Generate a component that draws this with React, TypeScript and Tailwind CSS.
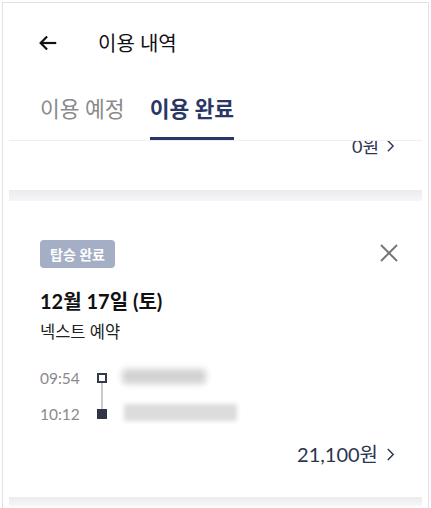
import React from "react";

const font = { fontFamily: "Lato, 'Noto Sans CJK KR', sans-serif" };

const Chevron = ({ className }: { className?: string }) => (
  <svg className={className} viewBox="0 0 10 16" fill="none" stroke="currentColor" strokeWidth="1.6">
    <polyline points="2,2 8,8 2,14" />
  </svg>
);

export default function App() {
  return (
    <div className="w-[431px] h-[508px] bg-white overflow-hidden pt-[2px] pl-[2px] pr-[2px]" style={font}>
      <div className="h-[520px] border-l border-t border-r border-[#e2e2e2]">
        {/* header */}
        <div className="h-[80px] flex items-center pl-[34px]">
          <svg className="w-[22px] h-[22px] text-[#111]" viewBox="0 0 24 24" fill="none" stroke="currentColor" strokeWidth="2.4">
            <line x1="21" y1="12" x2="4" y2="12" />
            <polyline points="11,5 4,12 11,19" />
          </svg>
          <span className="ml-[39px] text-[20px] text-[#111]">이용 내역</span>
        </div>

        {/* tabs */}
        <div className="mx-[6px] h-[58px] flex items-end gap-[25px] pl-[31px] border-b border-[#eeeeee]">
          <div className="pb-[17px] text-[21.5px] leading-[28px] text-[#8a8a8a]">이용 예정</div>
          <div className="pb-[14px] border-b-[3px] border-[#2a3766] text-[21.5px] leading-[28px] font-bold text-[#2a3766]">
            이용 완료
          </div>
        </div>

        {/* previous card tail */}
        <div className="mx-[6px] h-[49px] overflow-hidden">
          <div className="-mt-[7px] flex justify-end items-center pr-[27px] text-[18px] leading-[24px] text-[#2d3550]">
            0원
            <Chevron className="w-[9px] h-[14px] ml-[7px]" />
          </div>
        </div>

        <div className="mx-[6px] h-[11px] bg-gradient-to-b from-[#ececee] to-[#f5f6f7]" />

        {/* card */}
        <div className="mx-[6px] h-[296px] pt-[39px] pl-[31px] pr-[27px]">
          <div className="flex items-start justify-between">
            <span className="h-[28px] px-[10px] flex items-center rounded-[4px] bg-[#a4aec5] text-white text-[14px] font-bold">
              탑승 완료
            </span>
            <svg className="w-[20px] h-[20px] mt-[3px] -mr-[4px] text-[#777]" viewBox="0 0 20 20" fill="none" stroke="currentColor" strokeWidth="2">
              <line x1="2" y1="2" x2="18" y2="18" />
              <line x1="18" y1="2" x2="2" y2="18" />
            </svg>
          </div>
          <div className="mt-[19px] text-[20px] leading-[28px] font-bold text-[#111]">12월 17일 (토)</div>
          <div className="mt-[5px] text-[16.5px] leading-[24px] text-[#222]">넥스트 예약</div>

          <div className="mt-[23px] flex">
            <div className="flex flex-col gap-[14px] text-[15.5px] leading-[22px] text-[#8a8a8a] w-[57px]">
              <span>09:54</span>
              <span>10:12</span>
            </div>
            <div className="flex flex-col items-center pt-[6px] w-[10px]">
              <div className="w-[10px] h-[10px] border-2 border-[#333a4d]" />
              <div className="w-[2px] h-[26px] bg-[#c9cad0]" />
              <div className="w-[10px] h-[10px] bg-[#2f3447]" />
            </div>
            <div className="ml-[15px] flex flex-col pt-[2px]">
              <div className="w-[84px] h-[15px] bg-[#d2d2d2] blur-[3px] rounded" />
              <div className="ml-[2px] mt-[20px] w-[113px] h-[17px] bg-[#dcdcdc] blur-[2px]" />
            </div>
          </div>

          <div className="mt-[16px] flex justify-end items-center text-[20px] leading-[26px] text-[#2d3550]">
            21,100원
            <Chevron className="w-[9px] h-[15px] ml-[8px]" />
          </div>
        </div>

        <div className="mx-[6px] h-[9px] bg-gradient-to-b from-[#ececee] to-[#f5f6f7]" />
      </div>
    </div>
  );
}
